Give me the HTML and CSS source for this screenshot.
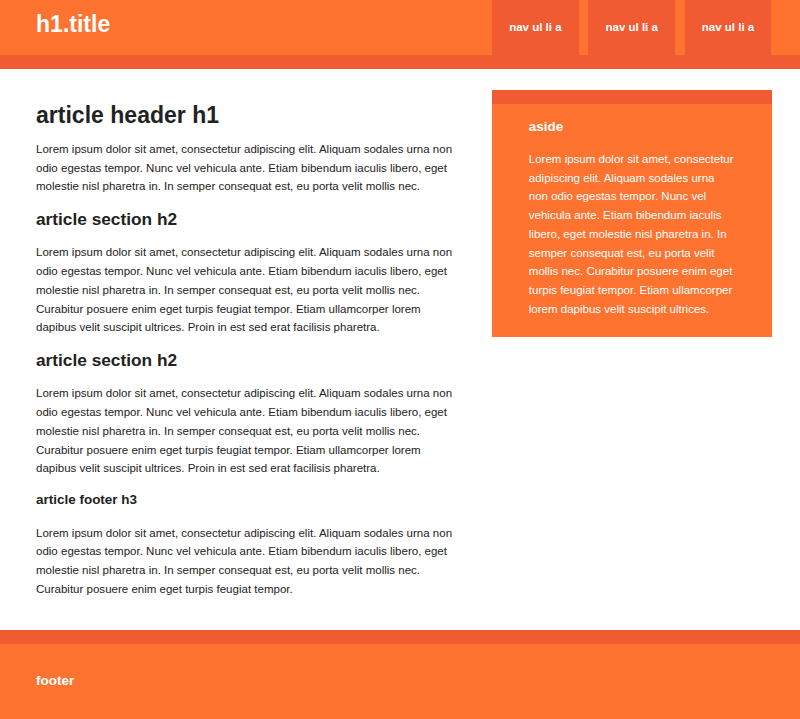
FILE: index.html
```html
<!DOCTYPE html>
<html>
<head>
<meta charset="utf-8">
<title>Layout</title>
<link rel="stylesheet" href="styles.css">
</head>
<body>
<div class="header-container">
  <header class="wrapper header">
    <h1 class="title">h1.title</h1>
    <nav class="nav">
      <ul class="nav-list">
        <li><a class="nav-link" href="#">nav ul li a</a></li>
        <li><a class="nav-link" href="#">nav ul li a</a></li>
        <li><a class="nav-link" href="#">nav ul li a</a></li>
      </ul>
    </nav>
  </header>
</div>

<div class="main-container">
  <div class="wrapper main">
    <article class="article">
      <header>
        <h1 class="article-title">article header h1</h1>
        <p>Lorem ipsum dolor sit amet, consectetur adipiscing elit. Aliquam sodales urna non odio egestas tempor. Nunc vel vehicula ante. Etiam bibendum iaculis libero, eget molestie nisl pharetra in. In semper consequat est, eu porta velit mollis nec.</p>
      </header>
      <section>
        <h2 class="section-title">article section h2</h2>
        <p>Lorem ipsum dolor sit amet, consectetur adipiscing elit. Aliquam sodales urna non odio egestas tempor. Nunc vel vehicula ante. Etiam bibendum iaculis libero, eget molestie nisl pharetra in. In semper consequat est, eu porta velit mollis nec. Curabitur posuere enim eget turpis feugiat tempor. Etiam ullamcorper lorem dapibus velit suscipit ultrices. Proin in est sed erat facilisis pharetra.</p>
      </section>
      <section>
        <h2 class="section-title">article section h2</h2>
        <p>Lorem ipsum dolor sit amet, consectetur adipiscing elit. Aliquam sodales urna non odio egestas tempor. Nunc vel vehicula ante. Etiam bibendum iaculis libero, eget molestie nisl pharetra in. In semper consequat est, eu porta velit mollis nec. Curabitur posuere enim eget turpis feugiat tempor. Etiam ullamcorper lorem dapibus velit suscipit ultrices. Proin in est sed erat facilisis pharetra.</p>
      </section>
      <footer>
        <h3 class="small-title">article footer h3</h3>
        <p>Lorem ipsum dolor sit amet, consectetur adipiscing elit. Aliquam sodales urna non odio egestas tempor. Nunc vel vehicula ante. Etiam bibendum iaculis libero, eget molestie nisl pharetra in. In semper consequat est, eu porta velit mollis nec. Curabitur posuere enim eget turpis feugiat tempor.</p>
      </footer>
    </article>

    <aside class="aside">
      <h3 class="small-title">aside</h3>
      <p>Lorem ipsum dolor sit amet, consectetur adipiscing elit. Aliquam sodales urna non odio egestas tempor. Nunc vel vehicula ante. Etiam bibendum iaculis libero, eget molestie nisl pharetra in. In semper consequat est, eu porta velit mollis nec. Curabitur posuere enim eget turpis feugiat tempor. Etiam ullamcorper lorem dapibus velit suscipit ultrices.</p>
    </aside>
  </div>
</div>

<div class="footer-container">
  <footer class="wrapper footer">
    <h3 class="small-title">footer</h3>
  </footer>
</div>
</body>
</html>
```

FILE: styles.css
```css
html, body {
  margin: 0;
  padding: 0;
}

body {
  font-family: "Liberation Sans", Arial, Helvetica, sans-serif;
  font-size: 11.52px;
  line-height: 18.72px;
  color: #222;
  background: #fff;
}

.wrapper {
  width: 736px;
  margin: 0 28px 0 36px;
  box-sizing: border-box;
}

p {
  margin: 11.52px 0;
}

.header-container {
  background: #fe7330;
  border-bottom: 14.4px solid #f05b33;
}

.header {
  display: flex;
  justify-content: space-between;
  align-items: flex-start;
}

.title {
  color: #fff;
  font-size: 23.04px;
  font-weight: bold;
  margin: 15.44px 0;
}

.nav {
  width: 280px;
}

.nav-list {
  list-style: none;
  margin: 0;
  padding: 0;
  display: flex;
  gap: 9.52px;
}

.nav-link {
  display: block;
  width: 75.6px;
  padding: 18px 5.6px;
  text-align: center;
  text-decoration: none;
  font-weight: bold;
  color: #fff;
  background: #f05b33;
}

.main-container {
  background: #fff;
}

.main {
  display: flex;
  justify-content: space-between;
  align-items: flex-start;
  padding: 21.6px 0 19.6px;
}

.article {
  width: 419.5px;
}

.article-title {
  font-size: 23.04px;
  font-weight: bold;
  margin: 15.44px 0;
}

.section-title {
  font-size: 17.28px;
  font-weight: bold;
  margin: 14.34px 0;
}

.small-title {
  font-size: 13.48px;
  font-weight: bold;
  margin: 13.48px 0;
}

.aside {
  width: 280px;
  box-sizing: border-box;
  background: #fe7330;
  border-top: 14.4px solid #f05b33;
  color: #fff;
  padding: 0 36.8px 7.2px;
}

.footer-container {
  background: #fe7330;
  border-top: 14.4px solid #f05b33;
}

.footer {
  color: #fff;
  padding: 15px 0 20px;
}
```
